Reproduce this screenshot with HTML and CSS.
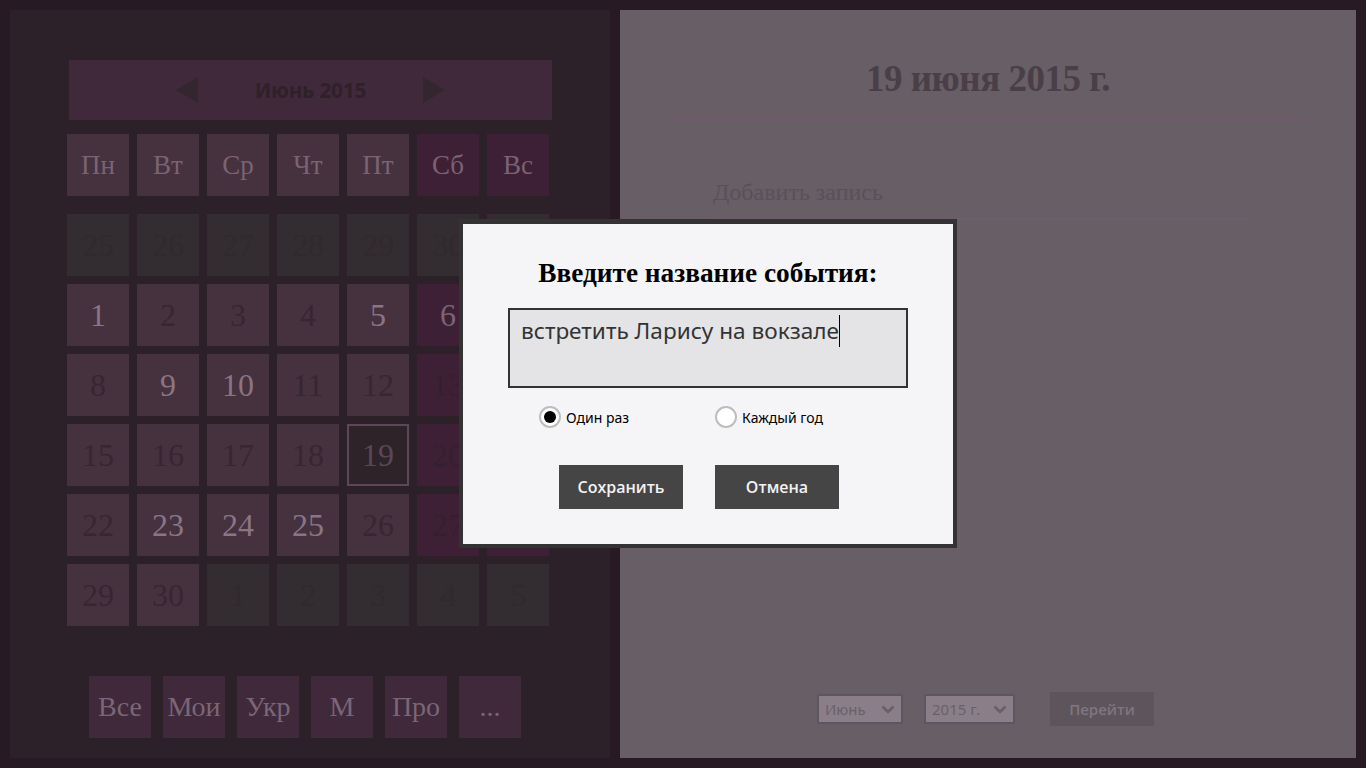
FILE: index.html
```html
<!DOCTYPE html>
<html lang="ru">
<head>
<meta charset="utf-8">
<title>Календарь</title>
<link rel="stylesheet" href="styles.css">
</head>
<body>
<div class="screen">
  <section class="left">
    <div class="month-bar">
      <span class="arrow arrow-left"></span>
      <span class="month-title">Июнь 2015</span>
      <span class="arrow arrow-right"></span>
    </div>
    <div class="weekdays">
      <div class="wd">Пн</div><div class="wd">Вт</div><div class="wd">Ср</div><div class="wd">Чт</div><div class="wd">Пт</div><div class="wd we">Сб</div><div class="wd we">Вс</div>
    </div>
    <div class="days">
      <div class="d other">25</div><div class="d other">26</div><div class="d other">27</div><div class="d other">28</div><div class="d other">29</div><div class="d other">30</div><div class="d other">31</div>
      <div class="d lit">1</div><div class="d">2</div><div class="d">3</div><div class="d">4</div><div class="d lit">5</div><div class="d we lit">6</div><div class="d we">7</div>
      <div class="d">8</div><div class="d lit">9</div><div class="d lit">10</div><div class="d">11</div><div class="d">12</div><div class="d we">13</div><div class="d we">14</div>
      <div class="d">15</div><div class="d">16</div><div class="d">17</div><div class="d">18</div><div class="d sel">19</div><div class="d we">20</div><div class="d we">21</div>
      <div class="d">22</div><div class="d lit">23</div><div class="d lit">24</div><div class="d lit">25</div><div class="d">26</div><div class="d we">27</div><div class="d we">28</div>
      <div class="d">29</div><div class="d">30</div><div class="d other">1</div><div class="d other">2</div><div class="d other">3</div><div class="d other">4</div><div class="d other">5</div>
    </div>
    <div class="filters">
      <div class="f">Все</div><div class="f">Мои</div><div class="f">Укр</div><div class="f">М</div><div class="f">Про</div><div class="f">...</div>
    </div>
  </section>
  <section class="right">
    <h1 class="date-title">19 июня 2015 г.</h1>
    <div class="rule"></div>
    <div class="add-entry">Добавить запись</div>
    <div class="spacer"></div>
    <div class="nav">
      <div class="select sel-month"><span>Июнь</span><svg class="chev" viewBox="0 0 14 9" width="14" height="9"><path d="M1.5 1.5 L7 7 L12.5 1.5" fill="none" stroke="#6a5f68" stroke-width="2.6"/></svg></div>
      <div class="select sel-year"><span>2015 г.</span><svg class="chev" viewBox="0 0 14 9" width="14" height="9"><path d="M1.5 1.5 L7 7 L12.5 1.5" fill="none" stroke="#6a5f68" stroke-width="2.6"/></svg></div>
      <div class="go">Перейти</div>
    </div>
  </section>

  <div class="dialog">
    <h2 class="dlg-title">Введите название события:</h2>
    <div class="textbox"><span class="tb-text">встретить Ларису на вокзале</span><span class="caret"></span></div>
    <div class="radios">
      <div class="radio r1"><span class="circle on"></span><span class="rlabel">Один раз</span></div>
      <div class="radio r2"><span class="circle"></span><span class="rlabel">Каждый год</span></div>
    </div>
    <div class="buttons">
      <div class="btn">Сохранить</div>
      <div class="btn">Отмена</div>
    </div>
  </div>
</div>
</body>
</html>
```

FILE: styles.css
```css
* { box-sizing: border-box; }
html, body { margin: 0; padding: 0; }
body {
  background: #281a24;
  width: 1366px;
  height: 768px;
  overflow: hidden;
  font-family: "Liberation Serif", "Times New Roman", serif;
}
.screen {
  position: relative;
  display: flex;
  gap: 10px;
  padding: 10px 10px 10px 10px;
  height: 768px;
}
.left {
  width: 600px;
  height: 748px;
  background: #2c2129;
  padding: 50px 0 0 57px;
  display: flex;
  flex-direction: column;
}
.month-bar {
  margin-left: 2px;
  width: 483px;
  height: 60px;
  background: #41293c;
  display: flex;
  align-items: center;
  justify-content: center;
  gap: 57px;
}
.arrow {
  width: 0; height: 0;
  border-top: 13px solid transparent;
  border-bottom: 13px solid transparent;
}
.arrow-left { border-right: 22px solid #33262f; }
.arrow-right { border-left: 22px solid #33262f; }
.month-title {
  font-family: "Noto Sans", "Open Sans", sans-serif;
  font-weight: bold;
  font-size: 21px;
  color: #2f2129;
  line-height: 1;
  letter-spacing: -0.3px;
}
.weekdays {
  margin-top: 14px;
  display: grid;
  grid-template-columns: repeat(7, 62px);
  gap: 8px;
}
.wd {
  height: 62px;
  background: #46313f;
  color: #7a6373;
  font-size: 27px;
  display: flex;
  align-items: center;
  justify-content: center;
}
.wd.we { background: #3e2036; }
.days {
  margin-top: 18px;
  display: grid;
  grid-template-columns: repeat(7, 62px);
  grid-auto-rows: 62px;
  gap: 8px;
}
.d {
  background: #46313f;
  color: #372631;
  font-size: 32px;
  display: flex;
  align-items: center;
  justify-content: center;
}
.d.we { background: #3e2036; color: #33202d; }
.d.lit { color: #8a7585; }
.d.we.lit { color: #7a6474; }
.d.other { background: #332c31; color: #302a2f; }
.d.sel { background: #2d2329; border: 2px solid #5b4757; color: #5a4756; }
.filters {
  margin-top: 50px;
  margin-left: 22px;
  display: flex;
  gap: 12px;
}
.f {
  width: 62px;
  height: 62px;
  background: #41293c;
  color: #7b6676;
  font-size: 28px;
  display: flex;
  align-items: center;
  justify-content: center;
}
.right {
  width: 736px;
  height: 748px;
  background: #675e66;
  display: flex;
  flex-direction: column;
}
.date-title {
  margin: 47px 0 0 0;
  text-align: center;
  font-size: 37px;
  font-weight: bold;
  color: #4a3f47;
  line-height: 44px;
  letter-spacing: -0.5px;
}
.rule {
  margin: 15px 49px 0 49px;
  height: 3px;
  background: #6d5b6b;
}
.add-entry {
  margin: 58px 0 0 93px;
  width: 537px;
  font-size: 24px;
  color: #5b5059;
  line-height: 30px;
  padding-bottom: 11px;
  border-bottom: 2px solid #6f5c6c;
}
.spacer { flex: 1; }
.nav {
  display: flex;
  align-items: center;
  margin: 0 0 32px 197px;
  height: 34px;
}
.select {
  height: 30px;
  background: #8a7f88;
  border: 2px solid #5d5560;
  display: flex;
  align-items: center;
  justify-content: space-between;
  padding: 0 6px 0 6px;
  font-family: "Noto Sans", "Open Sans", sans-serif;
  font-size: 15px;
  color: #6a5f68;
}
.sel-month { width: 86px; }
.sel-year { width: 91px; margin-left: 21px; }
.go {
  margin-left: 35px;
  width: 104px;
  height: 34px;
  background: #5d555b;
  color: #807680;
  font-family: "Open Sans", "Noto Sans", sans-serif;
  font-weight: 600;
  font-size: 15px;
  display: flex;
  align-items: center;
  justify-content: center;
}
.dialog {
  position: absolute;
  left: 459px;
  top: 219px;
  width: 498px;
  height: 329px;
  background: #f5f5f7;
  border: 4px solid #333333;
  border-top-width: 5px;
}
.dlg-title {
  margin: 32px 0 0 0;
  text-align: center;
  font-size: 27.3px;
  font-weight: bold;
  color: #000;
  line-height: 34px;
}
.textbox {
  margin: 18px 0 0 45px;
  width: 400px;
  height: 80px;
  background: #e4e4e6;
  border: 2px solid #333;
  padding: 4px 0 0 11px;
  display: flex;
  align-items: flex-start;
  font-family: "Noto Sans", "Open Sans", sans-serif;
  font-size: 22.6px;
  color: #333;
  line-height: 34px;
}
.caret {
  display: inline-block;
  width: 1px;
  height: 32px;
  background: #000;
  margin-top: 1px;
}
.radios {
  margin-top: 17px;
  height: 24px;
  display: flex;
  align-items: center;
}
.radio {
  display: flex;
  align-items: center;
  gap: 5px;
  font-family: "Noto Sans", "Open Sans", sans-serif;
  font-size: 14px;
  color: #000;
}
.r1 { margin-left: 76px; }
.r2 { margin-left: 86px; }
.circle {
  width: 22px;
  height: 22px;
  border-radius: 50%;
  border: 2px solid #bdbdbd;
  background: #fff;
  display: flex;
  align-items: center;
  justify-content: center;
}
.circle.on::after {
  content: "";
  width: 12px;
  height: 12px;
  border-radius: 50%;
  background: #000;
}
.buttons {
  margin: 36px 0 0 96px;
  display: flex;
  gap: 32px;
}
.btn {
  width: 124px;
  height: 44px;
  background: #454545;
  color: #f2f2f2;
  font-family: "Open Sans", "Noto Sans", sans-serif;
  font-weight: 600;
  font-size: 16px;
  display: flex;
  align-items: center;
  justify-content: center;
}
```
